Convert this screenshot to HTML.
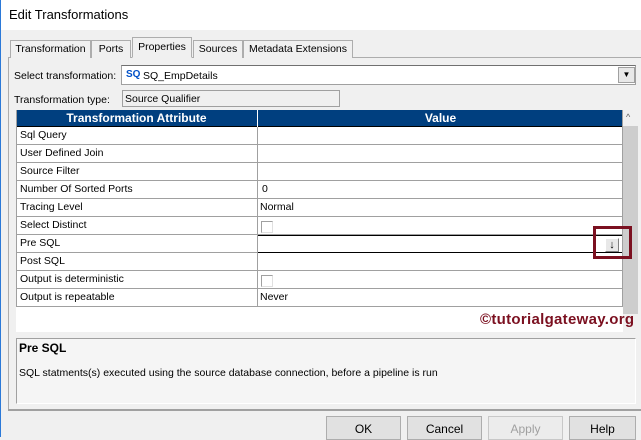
<!DOCTYPE html>
<html><head><style>
*{box-sizing:border-box;margin:0;padding:0}
body{width:641px;height:437px;background:#f0f0f0;font-family:"Liberation Sans",Arial,sans-serif;font-size:10.5px;color:#000;position:relative;overflow:hidden}
.a{position:absolute}
.tab{position:absolute;top:40px;height:18px;border:1px solid #adadad;border-bottom:none;background:#f0f0f0;padding-top:2px;text-align:center;white-space:nowrap}
.row{position:absolute;left:16px;width:607px;height:18px;border-bottom:1px solid #a0a0a0;background:#fff}
.row span{position:absolute;left:4px;top:2px}
.row i{position:absolute;left:244px;top:2px;font-style:normal}
.cb{position:absolute;left:245px;top:4px;width:12px;height:12px;border:1px solid #a0a0a0;border-right-color:#e0e0e0;border-bottom-color:#e0e0e0}
.btn{position:absolute;top:416px;height:24px;border:1px solid #adadad;background:#e1e1e1;text-align:center;padding-top:5px;font-size:12px}
</style></head><body>
<div class="a" style="left:0;top:0;width:641px;height:30px;background:#fff"></div>
<div class="a" style="left:0;top:0;width:1px;height:437px;background:#2b79d8"></div>
<div class="a" style="left:9px;top:7px;font-size:13px">Edit Transformations</div>
<div class="a" style="left:8px;top:57px;width:633px;height:1px;background:#adadad"></div>
<div class="tab" style="left:10px;width:81px">Transformation</div>
<div class="tab" style="left:91px;width:40px">Ports</div>
<div class="tab" style="left:132px;width:60px;top:37px;height:21px;border-bottom:1px solid #f0f0f0;padding-top:3px">Properties</div>
<div class="tab" style="left:193px;width:50px">Sources</div>
<div class="tab" style="left:243px;width:110px">Metadata Extensions</div>
<div class="a" style="left:8px;top:57px;width:1px;height:352px;background:#adadad"></div>
<div class="a" style="left:14px;top:70px">Select transformation:</div>
<div class="a" style="left:121px;top:65px;width:515px;height:20px;background:#fff;border:1px solid #a0a0a0;border-top-color:#707070"></div>
<div class="a" style="left:126px;top:69px;color:#0050c8;font-weight:bold;font-size:10px">SQ</div>
<div class="a" style="left:143px;top:70px">SQ_EmpDetails</div>
<div class="a" style="left:618px;top:67px;width:17px;height:16px;background:#e8e8e8;border:1px solid #a0a0a0;font-size:8px;text-align:center;padding-top:2px">▼</div>
<div class="a" style="left:14px;top:94px">Transformation type:</div>
<div class="a" style="left:122px;top:90px;width:218px;height:17px;background:#f0f0f0;border:1px solid #a0a0a0;padding:2px 2px">Source Qualifier</div>
<div class="a" style="left:16px;top:110px;width:607px;height:222px;background:#fff"></div>
<div class="a" style="left:16px;top:110px;width:607px;height:17px;background:#003f7f;border-bottom:1px solid #000;color:#fff;font-weight:bold;font-size:12px">
<div class="a" style="left:0;width:241px;text-align:center;top:1px">Transformation Attribute</div>
<div class="a" style="left:241px;top:0;width:1px;height:17px;background:#fff"></div>
<div class="a" style="left:242px;width:365px;text-align:center;top:1px">Value</div></div>
<div class="row" style="top:127px"><span>Sql Query</span></div>
<div class="row" style="top:145px"><span>User Defined Join</span></div>
<div class="row" style="top:163px"><span>Source Filter</span></div>
<div class="row" style="top:181px"><span>Number Of Sorted Ports</span><i style="left:246px">0</i></div>
<div class="row" style="top:199px"><span>Tracing Level</span><i>Normal</i></div>
<div class="row" style="top:217px"><span>Select Distinct</span><div class="cb"></div></div>
<div class="row" style="top:235px"><span>Pre SQL</span><div class="a" style="left:241px;top:0;width:366px;height:18px;border:1px solid #000"></div><div class="a" style="left:589px;top:3px;width:14px;height:14px;background:#e8e8e8;border:1px solid #808080;border-top-color:#fff;border-left-color:#fff;font-size:11px;font-weight:bold;text-align:center;line-height:12px">↓</div></div>
<div class="row" style="top:253px"><span>Post SQL</span></div>
<div class="row" style="top:271px"><span>Output is deterministic</span><div class="cb"></div></div>
<div class="row" style="top:289px"><span>Output is repeatable</span><i>Never</i></div>
<div class="a" style="left:16px;top:110px;width:1px;height:197px;background:#a0a0a0"></div>
<div class="a" style="left:257px;top:127px;width:1px;height:180px;background:#a0a0a0"></div>
<div class="a" style="left:622px;top:110px;width:1px;height:197px;background:#a0a0a0"></div>
<div class="a" style="left:623px;top:110px;width:15px;height:222px;background:#f0f0f0"></div>
<div class="a" style="left:623px;top:126px;width:15px;height:188px;background:#cdcdcd"></div>
<div class="a" style="left:626px;top:112px;font-size:9px;color:#606060">^</div>
<div class="a" style="left:593px;top:226px;width:39px;height:33px;border:3px solid #7b1020"></div>
<div class="a" style="left:480px;top:311px;color:#7b1020;font-weight:bold;font-size:15px;letter-spacing:0.3px">©tutorialgateway.org</div>
<div class="a" style="left:16px;top:338px;width:620px;height:66px;background:#f5f5f5;border:1px solid #a0a0a0;border-right-color:#fff;border-bottom-color:#fff"></div>
<div class="a" style="left:19px;top:341px;font-weight:bold;font-size:12px">Pre SQL</div>
<div class="a" style="left:19px;top:367px">SQL statments(s) executed using the source database connection, before a pipeline is run</div>
<div class="a" style="left:8px;top:409px;width:633px;height:2px;background:#a0a0a0"></div>
<div class="btn" style="left:326px;width:75px">OK</div>
<div class="btn" style="left:407px;width:75px">Cancel</div>
<div class="btn" style="left:488px;width:75px;color:#a0a0a0;background:#ececec;border-color:#c8c8c8">Apply</div>
<div class="btn" style="left:569px;width:67px">Help</div>
</body></html>
